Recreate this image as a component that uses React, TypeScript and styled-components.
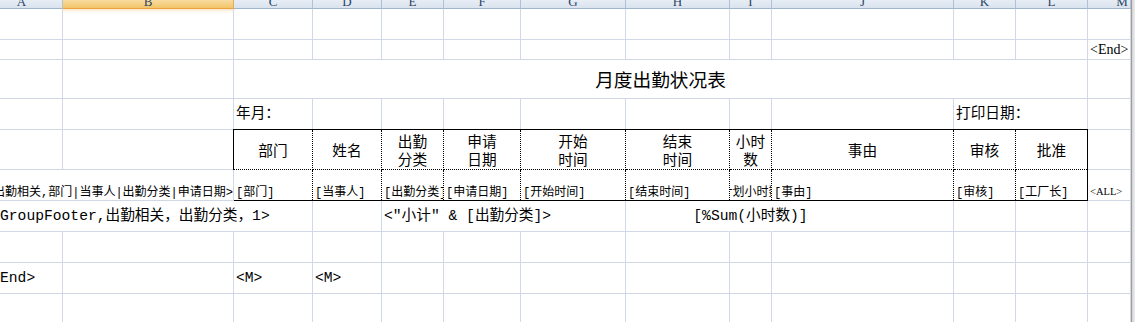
import styled, { createGlobalStyle } from 'styled-components';

const COLS = [63, 171, 79, 69, 62, 77, 105, 104, 42, 182, 62, 72, 43];
const ROWS = [9, 31, 20, 39, 31, 40, 31, 31, 31, 31, 31];
const TABLE_COLS = [79, 69, 62, 77, 105, 104, 42, 182, 62, 71];
const LETTERS = 'ABCDEFGHIJKLM'.split('');
const GRID_LINE = '#d0d7e5';
const SONG = '"Liberation Mono", "Noto Sans CJK SC", monospace';
const SERIF = '"Liberation Serif", "Noto Sans CJK SC", serif';

const HEADS = ['部门', '姓名', '出勤\n分类', '申请\n日期', '开始\n时间', '结束\n时间', '小时\n数', '事由', '审核', '批准'];
const FIELDS: { text: string; center?: boolean }[] = [
  { text: '[部门]' },
  { text: '[当事人]' },
  { text: '[出勤分类]' },
  { text: '[申请日期]' },
  { text: '[开始时间]' },
  { text: '[结束时间]' },
  { text: '[计划小时数]', center: true },
  { text: '[事由]' },
  { text: '[审核]' },
  { text: '[工厂长]' },
];

const px = (list: number[]) => list.map((n) => `${n}px`).join(' ');

type Flex = 'flex-start' | 'center' | 'flex-end';

const GlobalStyle = createGlobalStyle`
  *, *::before, *::after { box-sizing: border-box; }
  html, body { margin: 0; padding: 0; background: #fff; overflow: hidden; }
`;

const Page = styled.div`
  display: flex;
  width: 1135px;
  height: 322px;
  overflow: hidden;
  background: #fff;
`;

const Sheet = styled.div`
  display: grid;
  grid-template-columns: ${px(COLS)};
  grid-template-rows: ${px(ROWS)};
  width: 1131px;
  flex: none;
  font-family: ${SONG};
  color: #000;
`;

const ScrollEdge = styled.div`
  flex: 1;
  background: linear-gradient(to right, #9c9c9c 0, #9c9c9c 1px, #d4d4d4 1px, #ededed 100%);
`;

const ColHead = styled.div<{ $active?: boolean; $shift?: number }>`
  display: flex;
  align-items: flex-end;
  justify-content: center;
  overflow: hidden;
  padding-left: ${(p) => Math.max(0, (p.$shift ?? 0) * 2)}px;
  padding-right: ${(p) => Math.max(0, -(p.$shift ?? 0) * 2)}px;
  background: ${(p) =>
    p.$active ? 'linear-gradient(#f9dba0, #f3c56a)' : 'linear-gradient(#e7edf5, #dae3ee)'};
  border-right: 1px solid ${(p) => (p.$active ? '#e2ad5c' : '#b0c1d5')};
  border-bottom: 1px solid ${(p) => (p.$active ? '#eea23e' : '#9eb6ce')};
  box-shadow: ${(p) => (p.$active ? '0 2px 3px rgba(245, 182, 90, 0.3)' : 'none')};
`;

const ColLabel = styled.span`
  font-family: ${SERIF};
  font-size: 13px;
  line-height: 13px;
  color: #2a4466;
`;

const Cell = styled.div<{ $span?: number; $open?: boolean; $justify?: Flex; $valign?: Flex }>`
  grid-column: span ${(p) => p.$span ?? 1};
  display: flex;
  align-items: ${(p) => p.$valign ?? 'center'};
  justify-content: ${(p) => p.$justify ?? 'flex-start'};
  min-width: 0;
  padding: 0 2px;
  border-right: 1px solid ${(p) => (p.$open ? 'transparent' : GRID_LINE)};
  border-bottom: 1px solid ${GRID_LINE};
  font-size: 14.67px;
  line-height: 18px;
  white-space: nowrap;
`;

const EdgeCell = styled(Cell)`
  padding-left: 0;
`;

const TitleCell = styled(Cell)`
  justify-content: center;
  font-family: "Noto Sans CJK SC", sans-serif;
  font-size: 18.67px;
  line-height: 24px;
`;

const GroupCell = styled(Cell)`
  align-items: flex-end;
  justify-content: flex-end;
  overflow: hidden;
  padding: 0;
  font-size: 12px;
  line-height: 14px;
`;

const MarkCell = styled(Cell)<{ $size: number; $bottom?: boolean }>`
  align-items: ${(p) => (p.$bottom ? 'flex-end' : 'center')};
  padding-bottom: ${(p) => (p.$bottom ? 3 : 0)}px;
  font-family: ${SERIF};
  font-size: ${(p) => p.$size}px;
  line-height: normal;
`;

const TableBox = styled.div`
  grid-column: span 10;
  grid-row: span 2;
  margin: -1px 0 0 -1px;
  border: 1px solid #000;
  display: grid;
  grid-template-columns: ${px(TABLE_COLS)};
  grid-template-rows: 40px 30px;
  background: #fff;
`;

const HeadCell = styled.div<{ $last?: boolean }>`
  display: flex;
  align-items: center;
  justify-content: center;
  text-align: center;
  white-space: pre-line;
  border-right: ${(p) => (p.$last ? 'none' : '1px dotted #000')};
  border-bottom: 1px dotted #000;
  font-family: "Noto Sans CJK SC", sans-serif;
  font-size: 14.67px;
  line-height: 18px;
`;

const DataCell = styled.div<{ $last?: boolean; $center?: boolean }>`
  display: flex;
  align-items: flex-end;
  justify-content: ${(p) => (p.$center ? 'center' : 'flex-start')};
  overflow: hidden;
  padding: 0 ${(p) => (p.$center ? 0 : 2)}px;
  border-right: ${(p) => (p.$last ? 'none' : '1px dotted #000')};
  font-size: 12px;
  line-height: 14px;
  white-space: nowrap;
`;

const Blank = ({ n }: { n: number }) => (
  <>
    {Array.from({ length: n }, (_, i) => (
      <Cell key={i} />
    ))}
  </>
);

export default function App() {
  return (
    <>
      <GlobalStyle />
      <Page>
        <Sheet>
          {LETTERS.map((l) => (
            <ColHead key={l} $active={l === 'B'} $shift={l === 'A' ? -9.5 : l === 'M' ? 13 : 0}>
              <ColLabel>{l}</ColLabel>
            </ColHead>
          ))}

          <Blank n={13} />

          <Blank n={12} />
          <MarkCell $size={14}>&lt;End&gt;</MarkCell>

          <Blank n={2} />
          <TitleCell $span={10}>月度出勤状况表</TitleCell>
          <Blank n={1} />

          <Blank n={2} />
          <Cell>年月：</Cell>
          <Blank n={7} />
          <Cell $open>打印日期：</Cell>
          <Blank n={2} />

          <Blank n={2} />
          <TableBox>
            {HEADS.map((h, i) => (
              <HeadCell key={h} $last={i === HEADS.length - 1}>
                {h}
              </HeadCell>
            ))}
            {FIELDS.map((f, i) => (
              <DataCell key={f.text} $center={f.center} $last={i === FIELDS.length - 1}>
                {f.text}
              </DataCell>
            ))}
          </TableBox>
          <Blank n={1} />

          <GroupCell $span={2}>出勤相关,部门|当事人|出勤分类|申请日期&gt;</GroupCell>
          <MarkCell $size={10.5} $bottom>
            &lt;ALL&gt;
          </MarkCell>

          <EdgeCell $span={3}>GroupFooter,出勤相关，出勤分类，1&gt;</EdgeCell>
          <Blank n={1} />
          <Cell $span={3}>&lt;"小计" &amp; [出勤分类]&gt;</Cell>
          <Cell $open />
          <Cell $open $justify="center">
            [%Sum(小时数)]
          </Cell>
          <Blank n={4} />

          <Blank n={13} />

          <EdgeCell>End&gt;</EdgeCell>
          <Blank n={1} />
          <Cell>&lt;M&gt;</Cell>
          <Cell>&lt;M&gt;</Cell>
          <Blank n={9} />

          <Blank n={13} />
        </Sheet>
        <ScrollEdge />
      </Page>
    </>
  );
}
